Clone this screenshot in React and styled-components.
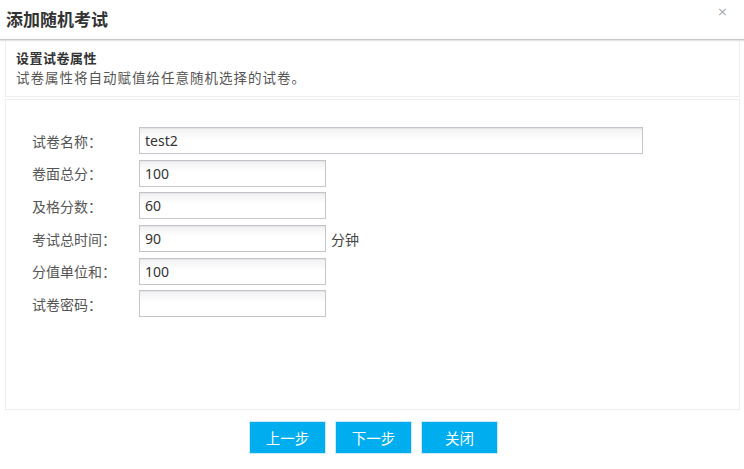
import React from "react";
import styled, { createGlobalStyle } from "styled-components";

const Global = createGlobalStyle`
  html, body { margin: 0; padding: 0; background: #fff; }
  body { font-family: "Noto Sans CJK SC", "Noto Sans", sans-serif; color: #333; }
  * { box-sizing: border-box; }
`;

const Dialog = styled.div`
  width: 744px;
  height: 469px;
  background: #fff;
  display: flex;
  flex-direction: column;
`;

const Header = styled.div`
  position: relative;
  height: 40px;
  flex: none;
  display: flex;
  align-items: center;
  padding: 0 0 3px 6px;
  border-bottom: 1px solid #c6c6c6;
  box-shadow: 0 1px 1px #e4e4e4;
`;

const Title = styled.h1`
  margin: 0;
  font-size: 17px;
  font-weight: bold;
  color: #333;
  line-height: 1;
`;

const Close = styled.span`
  position: absolute;
  right: 16px;
  top: 4px;
  font-family: "DejaVu Sans", sans-serif;
  font-size: 13px;
  color: #aaa;
`;

const Body = styled.div`
  padding: 0 4px 0 5px;
  display: flex;
  flex-direction: column;
`;

const InfoPanel = styled.div`
  height: 57px;
  border: 1px solid #eee;
  border-top: none;
  padding: 8px 10px 0 10px;
`;

const InfoTitle = styled.div`
  font-size: 13px;
  letter-spacing: 0.5px;
  font-weight: bold;
  color: #333;
  line-height: 19px;
`;

const InfoText = styled.div`
  font-size: 13.5px;
  letter-spacing: 1px;
  color: #555;
  line-height: 20px;
`;

const FormPanel = styled.div`
  margin-top: 2px;
  height: 311px;
  border: 1px solid #eee;
  padding: 27px 0 0 26px;
  display: grid;
  grid-template-columns: 107px auto;
  grid-auto-rows: 27px;
  row-gap: 5.7px;
  align-content: start;
`;

const Label = styled.label`
  font-size: 14px;
  color: #555;
  display: flex;
  align-items: center;
`;

const Field = styled.div`
  display: flex;
  align-items: center;
  gap: 5px;
`;

const Input = styled.input`
  width: ${(p) => p.$w}px;
  height: 27px;
  border: 1px solid #c4c4cc;
  background: linear-gradient(#f1f1f1, #fff 45%);
  box-shadow: inset 0 1px 1px rgba(0, 0, 0, 0.06);
  padding: 0 5px;
  font-family: "Noto Sans", "Noto Sans CJK SC", sans-serif;
  font-size: 14px;
  color: #333;
  outline: none;
`;

const Unit = styled.span`
  font-size: 14px;
  color: #444;
`;

const Footer = styled.div`
  margin-top: 11px;
  display: flex;
  justify-content: center;
  gap: 9px;
  padding-left: 2px;
`;

const Button = styled.button`
  width: 77px;
  height: 33px;
  background: #00adef;
  border: 1px solid #cfe9f7;
  color: #fff;
  font-family: "Noto Sans CJK SC", sans-serif;
  font-size: 14.5px;
  padding: 0;
  cursor: pointer;
`;

const rows = [
  { label: "试卷名称：", value: "test2", w: 504 },
  { label: "卷面总分：", value: "100", w: 187 },
  { label: "及格分数：", value: "60", w: 187 },
  { label: "考试总时间：", value: "90", w: 187, unit: "分钟" },
  { label: "分值单位和：", value: "100", w: 187 },
  { label: "试卷密码：", value: "", w: 187 },
];

export default function App() {
  return (
    <>
      <Global />
      <Dialog>
        <Header>
          <Title>添加随机考试</Title>
          <Close>×</Close>
        </Header>
        <Body>
          <InfoPanel>
            <InfoTitle>设置试卷属性</InfoTitle>
            <InfoText>试卷属性将自动赋值给任意随机选择的试卷。</InfoText>
          </InfoPanel>
          <FormPanel>
            {rows.map((r) => (
              <React.Fragment key={r.label}>
                <Label>{r.label}</Label>
                <Field>
                  <Input $w={r.w} defaultValue={r.value} />
                  {r.unit && <Unit>{r.unit}</Unit>}
                </Field>
              </React.Fragment>
            ))}
          </FormPanel>
          <Footer>
            <Button>上一步</Button>
            <Button>下一步</Button>
            <Button>关闭</Button>
          </Footer>
        </Body>
      </Dialog>
    </>
  );
}
